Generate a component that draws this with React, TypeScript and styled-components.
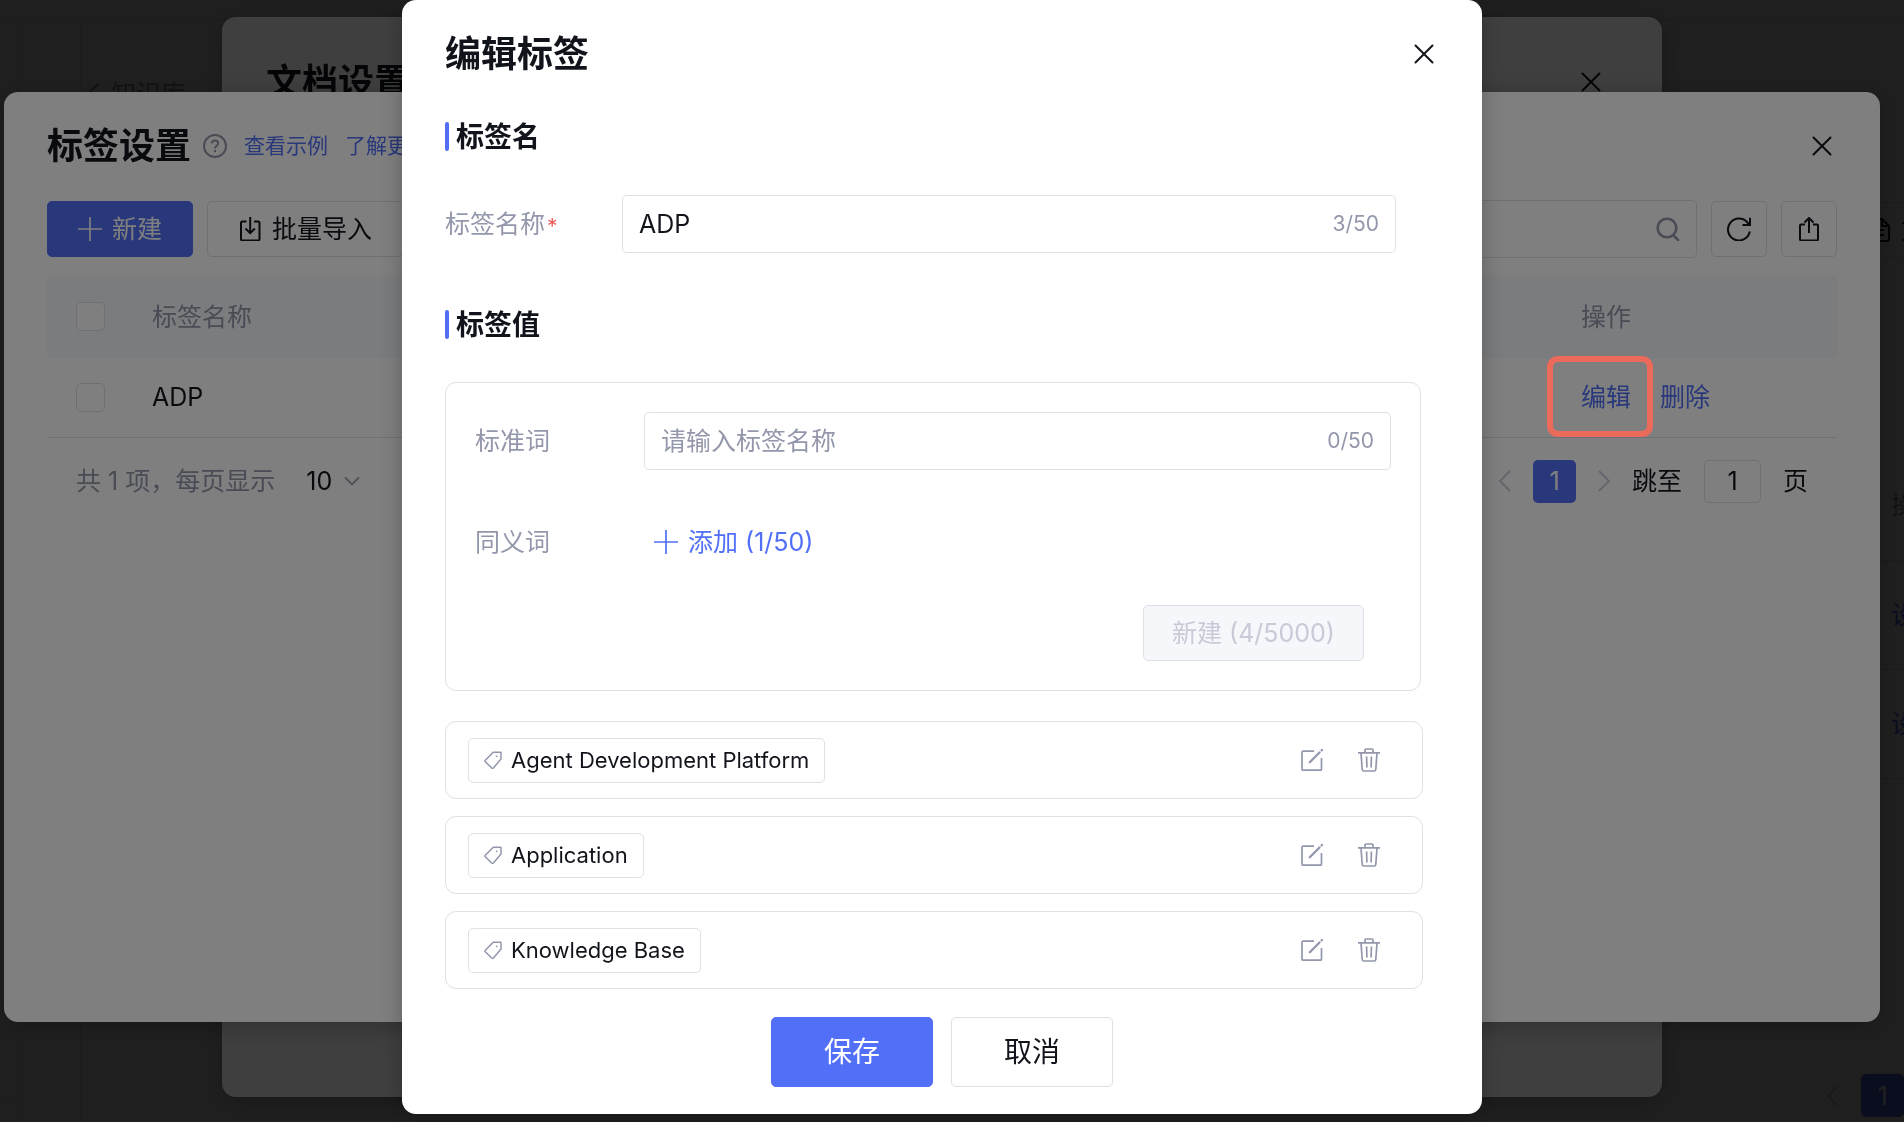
import React, { useState } from "react";
import styled, { createGlobalStyle, css } from "styled-components";

const color = {
  primary: "#526ff7",
  text: "#12141c",
  muted: "#9397ab",
  disabled: "#c8cad8",
  line: "#dfe1e8",
  headFill: "#f6f8fb",
  danger: "#ed5a5a",
  mark: "#ec6a5a",
};

const GlobalStyle = createGlobalStyle`
  *, *::before, *::after { box-sizing: border-box; }
  body {
    margin: 0;
    background: #fff;
    color: ${color.text};
    font-family: Inter, "Noto Sans CJK SC", sans-serif;
    font-size: 25px;
    line-height: 36px;
  }
  button, input, select { font: inherit; color: inherit; margin: 0; }
  h1, h2, h3, p { margin: 0; }
`;

/* ---------- icons ---------- */

const Svg = styled.svg<{ $size?: number; $stroke?: number }>`
  display: block;
  flex: none;
  width: ${(p) => p.$size ?? 24}px;
  height: ${(p) => p.$size ?? 24}px;
  fill: none;
  stroke: currentColor;
  stroke-width: ${(p) => p.$stroke ?? 2};
`;

const CloseIcon = () => (
  <Svg viewBox="0 0 24 24" strokeLinecap="round"><path d="M3.5 3.5l17 17M20.5 3.5l-17 17" /></Svg>
);
const PlusIcon = () => (
  <Svg viewBox="0 0 24 24" $stroke={1.7}><path d="M12 0v24M0 12h24" /></Svg>
);
const HelpIcon = () => (
  <Svg viewBox="0 0 24 24">
    <circle cx="12" cy="12" r="11" />
    <path d="M8.8 9.6c0-1.9 1.3-3.1 3.2-3.1s3.2 1.2 3.2 2.9c0 2.2-3.2 2.5-3.2 5" />
    <path d="M12 16v2.2" />
  </Svg>
);
const ImportIcon = () => (
  <Svg viewBox="0 0 24 24">
    <path d="M8.5 4.5h-4A1.500 1.500 0 0 0 3 6v16a1.500 1.500 0 0 0 1.500 1.500H20a1.500 1.500 0 0 0 1.500-1.500V6A1.500 1.500 0 0 0 20 4.500h-4" />
    <path d="M12.200 0v16M7.500 11.500l4.700 4.700 4.700-4.700" />
  </Svg>
);
const ExportIcon = () => (
  <Svg viewBox="0 0 24 24">
    <path d="M8 7.500H4a1 1 0 0 0-1 1V22a1.500 1.500 0 0 0 1.500 1.500h15A1.500 1.500 0 0 0 21 22V8.500a1 1 0 0 0-1-1h-4" />
    <path d="M12 16V1.500M7.500 5.500L12 1l4.500 4.500" />
  </Svg>
);
const RefreshIcon = () => (
  <Svg viewBox="0 0 24 24">
    <path d="M22.800 14.500A11 11 0 1 1 20.500 5.500l2 2.500" />
    <path d="M23 .8V8h-7.500" />
  </Svg>
);
const SearchIcon = () => (
  <Svg viewBox="0 0 24 24" $stroke={2.6}>
    <circle cx="11" cy="11" r="9.300" />
    <path d="M17 18l5 5" strokeLinecap="round" />
  </Svg>
);
const ChevronIcon = ({ d }: { d: "left" | "right" | "down" }) => (
  <Svg viewBox="0 0 24 24" $size={d === "down" ? 16 : 24} $stroke={d === "down" ? 2.6 : 1.8}>
    <path d={{ left: "M17 2L7 12l10 10", right: "M7 2l10 10L7 22", down: "M1.500 6.500L12 17 22.500 6.500" }[d]} />
  </Svg>
);
const FileIcon = () => (
  <Svg viewBox="0 0 24 24">
    <path d="M15 1H4a2 2 0 0 0-2 2v18a2 2 0 0 0 2 2h16a2 2 0 0 0 2-2V8zM15 1v7h7M8 12h9M8 17h9" />
  </Svg>
);
const TagIcon = () => (
  <Svg viewBox="0 0 18 18" $size={18} $stroke={1.5} strokeLinejoin="round">
    <path d="M9.200 1.200h7.300c.3 0 .5.200.5.500v6.300L9.400 17c-.5.500-1.200.5-1.700 0L1.300 10.800c-.5-.5-.5-1 0-1.500z" />
    <circle cx="12.700" cy="5.300" r=".9" fill="currentColor" stroke="none" />
  </Svg>
);
const EditIcon = () => (
  <Svg viewBox="0 0 24 24" $stroke={1.7}>
    <path d="M14 3.200H3a1 1 0 0 0-1 1v17a1 1 0 0 0 1 1h17.500a1 1 0 0 0 1-1V10" />
    <path d="M9.800 14.200l9.700-9.700M21.600 2.400l.4-.4" strokeLinecap="round" style={{ strokeWidth: 2.3 }} />
  </Svg>
);
const TrashIcon = () => (
  <Svg viewBox="0 0 24 24" $stroke={1.7}>
    <path d="M1 4.800h22M8 4.500V2a1 1 0 0 1 1-1h6a1 1 0 0 1 1 1v2.500M4 5l1.200 16.500a1.700 1.700 0 0 0 1.700 1.500h10.200a1.700 1.700 0 0 0 1.700-1.500L20 5" />
    <path d="M9.600 8.500l.3 11M14.400 8.500l-.3 11" />
  </Svg>
);

/* ---------- shared controls ---------- */

const Button = styled.button<{ $primary?: boolean; $large?: boolean; $icon?: boolean }>`
  display: inline-flex;
  align-items: center;
  justify-content: center;
  gap: 10px;
  flex: none;
  height: ${(p) => (p.$large ? 70 : 56)}px;
  min-width: ${(p) => (p.$large ? 162 : 56)}px;
  padding: 0 ${(p) => (p.$icon ? 30 : 28)}px;
  border: 1px solid ${(p) => (p.$primary ? color.primary : color.line)};
  border-radius: 5px;
  background: ${(p) => (p.$primary ? color.primary : "#fff")};
  color: ${(p) => (p.$primary ? "#fff" : color.text)};
  white-space: nowrap;
  ${(p) => p.$large && css`font-size: 28px;`}
  &:disabled {
    background: #f6f7fa;
    color: ${color.disabled};
  }
`;

const SquareButton = styled(Button)`
  padding: 0;
`;

const IconButton = styled.button<{ $tone?: string }>`
  display: flex;
  align-items: center;
  justify-content: center;
  width: 24px;
  height: 24px;
  padding: 0;
  border: 0;
  background: none;
  color: ${(p) => p.$tone ?? color.text};
`;

const TextButton = styled.button`
  display: inline-flex;
  align-items: center;
  gap: 10px;
  padding: 0;
  border: 0;
  background: none;
  color: ${color.primary};
`;

const Field = styled.div`
  display: flex;
  align-items: center;
  flex: 1;
  min-width: 0;
  height: 58px;
  padding: 0 16px;
  border: 1px solid ${color.line};
  border-radius: 5px;
  background: #fff;
  color: ${color.muted};
  input {
    flex: 1;
    min-width: 0;
    padding: 0;
    border: 0;
    outline: 0;
    background: none;
    color: ${color.text};
  }
  input::placeholder { color: ${color.muted}; opacity: 1; }
`;

const Count = styled.span`
  font-size: 21px;
`;

const Check = styled.input`
  display: block;
  appearance: none;
  width: 29px;
  height: 29px;
  border: 1px solid ${color.line};
  border-radius: 5px;
  background: #fff;
`;

/* ---------- dialog shell ---------- */

const Overlay = styled.div`
  position: fixed;
  inset: 0;
  display: flex;
  align-items: center;
  justify-content: center;
  padding: 0 20px 8px 0;
  background: rgba(0, 0, 0, 0.5);
`;

const Dialog = styled.section<{ $width: number; $minHeight?: number }>`
  flex: none;
  width: ${(p) => p.$width}px;
  max-width: calc(100% - 8px);
  min-height: ${(p) => p.$minHeight ?? 0}px;
  border-radius: 14px;
  background: #fff;
  box-shadow: 0 4px 24px rgba(0, 0, 0, 0.25);
`;

const DialogHead = styled.header<{ $roomy?: boolean }>`
  display: flex;
  align-items: center;
  height: 108px;
  padding: 0 46px 0 43px;
  ${(p) => p.$roomy && css`height: 130px; padding: 0 59px 0 44px;`}
`;

const DialogTitle = styled.h2`
  font-size: 36px;
  line-height: 50px;
  font-weight: 600;
`;

const Push = styled.div`
  margin-left: auto;
`;

/* ---------- knowledge base page ---------- */

const Page = styled.div`
  height: 100vh;
  overflow: hidden;
  display: flex;
  flex-direction: column;
`;
const TopBar = styled.div`
  flex: none;
  height: 20px;
  border-bottom: 1px solid ${color.line};
`;
const Columns = styled.div`
  flex: 1;
  display: flex;
  width: calc(100% + 126px);
`;
const Rail = styled.nav`
  width: 19px;
  padding-bottom: 20px;
  border-right: 1px solid ${color.line};
  display: flex;
  &::before { content: ""; flex: 1; border-bottom: 1px solid ${color.line}; }
`;
const SideNav = styled.nav`
  width: 62px;
  border-right: 1px solid ${color.line};
`;
const Main = styled.main`
  flex: 1;
  display: flex;
  flex-direction: column;
  padding-top: 56px;
`;
const Crumb = styled.a`
  display: flex;
  align-items: center;
  gap: 6px;
  color: ${color.muted};
  text-decoration: none;
`;
const PageTools = styled.div`
  display: flex;
  justify-content: flex-end;
  padding-top: 90px;
`;
const PageTable = styled.table`
  width: 100%;
  margin-top: 193px;
  border-collapse: collapse;
  text-align: right;
  th, td { padding: 0 89px 0 0; height: 109px; border-bottom: 1px solid ${color.line}; }
  th { font-weight: 400; color: ${color.muted}; }
  a { color: ${color.primary}; text-decoration: none; }
`;
const PagePager = styled.div`
  display: flex;
  align-items: center;
  justify-content: flex-end;
  gap: 16px;
  margin-top: auto;
  padding: 0 126px 5px 0;
  color: ${color.disabled};
`;

/* ---------- tag settings ---------- */

const Panel = styled.div`
  padding: 0 43px;
`;
const HelpWrap = styled.span`
  margin: 0 17px 0 12px;
  color: ${color.muted};
`;
const HeadLinks = styled.div`
  display: flex;
  gap: 17px;
  font-size: 21px;
  a { color: ${color.primary}; text-decoration: none; }
`;
const Toolbar = styled.div`
  display: flex;
  align-items: center;
  gap: 14px;
  height: 58px;
`;
const SearchField = styled(Field)`
  flex: none;
  width: 420px;
  margin-left: auto;
`;
const TagTable = styled.table`
  width: 100%;
  margin-top: 17px;
  border-collapse: collapse;
  table-layout: fixed;
  text-align: left;
  th, td { padding: 0 0 0 29px; }
  th { height: 83px; background: ${color.headFill}; color: ${color.muted}; font-weight: 400; }
  td { height: 79px; border-bottom: 1px solid ${color.line}; }
`;
const CheckCol = styled.col`
  width: 76px;
`;
const ActionCol = styled.col`
  width: 285px;
`;
const Actions = styled.div`
  display: flex;
  gap: 29px;
`;
const Pager = styled.footer`
  display: flex;
  align-items: center;
  padding: 22px 29px;
  p { color: ${color.muted}; }
`;
const SizeSelect = styled.div`
  display: grid;
  align-items: center;
  width: 54px;
  margin-left: 31px;
  select {
    grid-area: 1 / 1;
    width: 100%;
    padding: 0;
    border: 0;
    background: none;
    appearance: none;
  }
  svg { grid-area: 1 / 1; justify-self: end; color: ${color.muted}; pointer-events: none; }
`;
const PagerNav = styled.div`
  display: flex;
  align-items: center;
  gap: 16px;
  margin-left: auto;
`;
const PageNumber = styled.button`
  width: 43px;
  height: 43px;
  padding: 0;
  border: 0;
  border-radius: 5px;
  background: ${color.primary};
  color: #fff;
`;
const Jump = styled.label`
  display: flex;
  align-items: center;
  gap: 22px;
  input {
    width: 57px;
    height: 43px;
    padding: 0;
    border: 1px solid ${color.line};
    border-radius: 5px;
    background: #fff;
    text-align: center;
  }
`;

/* ---------- tag editor ---------- */

const Form = styled.form`
  padding: 14px 59px 27px 43px;
`;
const SectionTitle = styled.h3`
  display: flex;
  align-items: center;
  gap: 7px;
  height: 29px;
  font-size: 28px;
  font-weight: 600;
  &::before {
    content: "";
    width: 4px;
    height: 29px;
    border-radius: 2px;
    background: ${color.primary};
  }
`;
const Row = styled.div<{ $label: number }>`
  display: flex;
  align-items: center;
  min-height: 58px;
  > label, > span {
    display: flex;
    flex: none;
    width: ${(p) => p.$label}px;
    color: ${color.muted};
  }
`;
const NameRow = styled(Row)`
  margin: 44px 0 57px;
  padding-right: 27px;
`;
const Required = styled.i`
  padding: 6px 0 0 2px;
  color: ${color.danger};
  font-size: 21px;
  line-height: 30px;
  font-style: normal;
`;
const Box = styled.div`
  display: flex;
  flex-direction: column;
  gap: 43px;
  margin: 43px 2px 0 0;
  padding: 29px;
  border: 1px solid ${color.line};
  border-radius: 11px;
`;
const SynonymAdd = styled(TextButton)`
  margin-left: 10px;
`;
const BoxFoot = styled.div`
  display: flex;
  justify-content: flex-end;
  margin-top: -9px;
  padding-right: 27px;
`;
const ValueList = styled.ul`
  display: flex;
  flex-direction: column;
  gap: 17px;
  margin: 30px 0 28px;
  padding: 0;
  list-style: none;
`;
const ValueItem = styled.li`
  display: flex;
  align-items: center;
  gap: 33px;
  height: 78px;
  padding: 0 41px 0 22px;
  border: 1px solid ${color.line};
  border-radius: 11px;
`;
const TagChip = styled.span`
  display: inline-flex;
  align-items: center;
  gap: 9px;
  height: 45px;
  margin-right: auto;
  padding: 0 15px;
  border: 1px solid ${color.line};
  border-radius: 5px;
  font-size: 22px;
  svg { color: ${color.muted}; }
`;
const FormFoot = styled.div`
  display: flex;
  justify-content: center;
  gap: 18px;
  padding-left: 16px;
`;

/* Call-out frame drawn over the row action. */
const Callout = styled.div`
  position: absolute;
  top: 356px;
  left: calc(50% + 595px);
  width: 106px;
  height: 81px;
  border: 6px solid ${color.mark};
  border-radius: 11px;
  pointer-events: none;
`;

const KnowledgePage = () => (
  <Page>
    <TopBar />
    <Columns>
      <Rail />
      <SideNav />
      <Main>
        <Crumb href="#knowledge"><ChevronIcon d="left" />知识库</Crumb>
        <PageTools>
          <Button><FileIcon />文档设置</Button>
        </PageTools>
        <PageTable>
          <thead><tr><th>操作</th></tr></thead>
          <tbody>
            <tr><td><a href="#doc-1">设置</a></td></tr>
            <tr><td><a href="#doc-2">设置</a></td></tr>
          </tbody>
        </PageTable>
        <PagePager>
          <ChevronIcon d="left" />
          <PageNumber type="button">1</PageNumber>
        </PagePager>
      </Main>
    </Columns>
  </Page>
);

const TagSettings = () => (
  <Dialog $width={1876} $minHeight={930} aria-label="标签设置">
    <DialogHead>
      <DialogTitle>标签设置</DialogTitle>
      <HelpWrap><HelpIcon /></HelpWrap>
      <HeadLinks>
        <a href="#example">查看示例</a>
        <a href="#more">了解更多</a>
      </HeadLinks>
      <Push><IconButton aria-label="关闭"><CloseIcon /></IconButton></Push>
    </DialogHead>
    <Panel>
      <Toolbar>
        <Button $primary $icon><PlusIcon />新建</Button>
        <Button $icon><ImportIcon />批量导入</Button>
        <SearchField>
          <input type="search" aria-label="搜索标签" />
          <SearchIcon />
        </SearchField>
        <SquareButton aria-label="刷新"><RefreshIcon /></SquareButton>
        <SquareButton aria-label="导出"><ExportIcon /></SquareButton>
      </Toolbar>
      <TagTable>
        <colgroup><CheckCol /><col /><ActionCol /></colgroup>
        <thead>
          <tr>
            <th><Check type="checkbox" aria-label="全选" /></th>
            <th>标签名称</th>
            <th>操作</th>
          </tr>
        </thead>
        <tbody>
          <tr>
            <td><Check type="checkbox" aria-label="选择 ADP" /></td>
            <td>ADP</td>
            <td>
              <Actions>
                <TextButton type="button">编辑</TextButton>
                <TextButton type="button">删除</TextButton>
              </Actions>
            </td>
          </tr>
        </tbody>
      </TagTable>
      <Pager>
        <p>共 1 项，每页显示</p>
        <SizeSelect>
          <select aria-label="每页显示" defaultValue="10">
            <option>10</option>
            <option>20</option>
          </select>
          <ChevronIcon d="down" />
        </SizeSelect>
        <PagerNav>
          <IconButton $tone={color.disabled} aria-label="上一页"><ChevronIcon d="left" /></IconButton>
          <PageNumber type="button">1</PageNumber>
          <IconButton $tone={color.disabled} aria-label="下一页"><ChevronIcon d="right" /></IconButton>
          <Jump>跳至<input type="text" defaultValue="1" />页</Jump>
        </PagerNav>
      </Pager>
    </Panel>
  </Dialog>
);

const values = ["Agent Development Platform", "Application", "Knowledge Base"];

const TagEditor = () => {
  const [name, setName] = useState("ADP");
  const [word, setWord] = useState("");
  return (
    <Dialog $width={1080} aria-label="编辑标签">
      <DialogHead>
        <DialogTitle>编辑标签</DialogTitle>
        <Push><IconButton aria-label="关闭"><CloseIcon /></IconButton></Push>
      </DialogHead>
      <Form onSubmit={(e) => e.preventDefault()}>
        <SectionTitle>标签名</SectionTitle>
        <NameRow $label={177}>
          <label htmlFor="tag-name">标签名称<Required>*</Required></label>
          <Field>
            <input id="tag-name" value={name} maxLength={50} onChange={(e) => setName(e.target.value)} />
            <Count>{name.length}/50</Count>
          </Field>
        </NameRow>
        <SectionTitle>标签值</SectionTitle>
        <Box>
          <Row $label={169}>
            <label htmlFor="tag-word">标准词</label>
            <Field>
              <input
                id="tag-word"
                value={word}
                maxLength={50}
                placeholder="请输入标签名称"
                onChange={(e) => setWord(e.target.value)}
              />
              <Count>{word.length}/50</Count>
            </Field>
          </Row>
          <Row $label={169}>
            <span>同义词</span>
            <SynonymAdd type="button"><PlusIcon />添加 (1/50)</SynonymAdd>
          </Row>
          <BoxFoot>
            <Button type="button" disabled>新建 (4/5000)</Button>
          </BoxFoot>
        </Box>
        <ValueList>
          {values.map((value) => (
            <ValueItem key={value}>
              <TagChip><TagIcon />{value}</TagChip>
              <IconButton type="button" $tone={color.muted} aria-label={`编辑 ${value}`}><EditIcon /></IconButton>
              <IconButton type="button" $tone={color.muted} aria-label={`删除 ${value}`}><TrashIcon /></IconButton>
            </ValueItem>
          ))}
        </ValueList>
        <FormFoot>
          <Button $primary $large type="submit">保存</Button>
          <Button $large type="button">取消</Button>
        </FormFoot>
      </Form>
    </Dialog>
  );
};

export default function App() {
  return (
    <>
      <GlobalStyle />
      <KnowledgePage />
      <Overlay>
        <Dialog $width={1440} $minHeight={1080} aria-label="文档设置">
          <DialogHead $roomy>
            <DialogTitle>文档设置</DialogTitle>
            <Push><IconButton aria-label="关闭"><CloseIcon /></IconButton></Push>
          </DialogHead>
        </Dialog>
      </Overlay>
      <Overlay><TagSettings /></Overlay>
      <Overlay><TagEditor /></Overlay>
      <Callout />
    </>
  );
}
